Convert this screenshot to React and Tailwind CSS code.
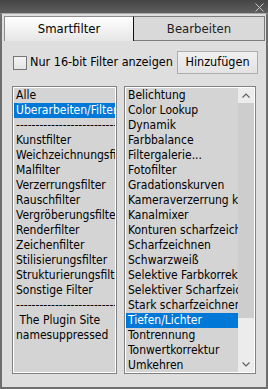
import React from "react";

const leftItems = [
  "Alle",
  "Überarbeiten/Filter",
  "------------------------------------",
  "Kunstfilter",
  "Weichzeichnungsfilter",
  "Malfilter",
  "Verzerrungsfilter",
  "Rauschfilter",
  "Vergröberungsfilter",
  "Renderfilter",
  "Zeichenfilter",
  "Stilisierungsfilter",
  "Strukturierungsfilter",
  "Sonstige Filter",
  "------------------------------------",
  " The Plugin Site",
  "namesuppressed",
];

const rightItems = [
  "Belichtung",
  "Color Lookup",
  "Dynamik",
  "Farbbalance",
  "Filtergalerie...",
  "Fotofilter",
  "Gradationskurven",
  "Kameraverzerrung korrigieren",
  "Kanalmixer",
  "Konturen scharfzeichnen",
  "Scharfzeichnen",
  "Schwarzweiß",
  "Selektive Farbkorrektur",
  "Selektiver Scharfzeichner",
  "Stark scharfzeichnen",
  "Tiefen/Lichter",
  "Tontrennung",
  "Tonwertkorrektur",
  "Umkehren",
  "Verflüssigen",
];

function Row({ text, selected }) {
  return (
    <div
      className={
        "h-[15px] leading-[15px] pl-[2px] whitespace-pre overflow-hidden " +
        (selected ? "bg-[#0078d7] text-white" : "text-black")
      }
    >
      {text}
    </div>
  );
}

export default function App() {
  return (
    <div
      className="w-[268px] h-[389px] flex flex-col overflow-hidden text-[12px]"
      style={{ fontFamily: '"DejaVu Sans Condensed", "DejaVu Sans", sans-serif' }}
    >
      {/* title bar */}
      <div className="h-[13px] shrink-0 bg-gradient-to-b from-[#454545] to-[#5e5e5e] flex justify-end items-center pr-[4px]">
        <svg width="9" height="9" viewBox="0 0 9 9" className="mt-[1px]">
          <path d="M0.5 0.5 L8.5 8.5 M8.5 0.5 L0.5 8.5" stroke="#c8c8c8" strokeWidth="1" />
        </svg>
      </div>
      {/* body */}
      <div className="flex-1 flex flex-col bg-[#dedede] border-x-2 border-b-2 border-[#6e6e6e] border-t border-t-[#a8a8a8]">
        {/* tabs */}
        <div className="flex mt-[2px] ml-[2px] mr-[1px] h-[25px]">
          <div className="w-[130px] border-l border-t border-[#8c8c8c] border-r border-r-[#111] bg-gradient-to-b from-[#ffffff] to-[#e6e6e6] flex items-center justify-center text-[13px] text-black whitespace-nowrap">
            Smartfilter
          </div>
          <div className="flex-1 border-t border-b border-r border-[#7c7c7c] bg-[#d9d9d9] flex items-center justify-center text-[13px] text-[#222] whitespace-nowrap">
            Bearbeiten
          </div>
        </div>
        {/* options row */}
        <div className="flex items-center mt-[10px] pl-[11px] pr-[8px] h-[23px]">
          <div className="w-[14px] h-[14px] shrink-0 border border-[#777] bg-gradient-to-b from-[#f4f4f4] to-[#e4e4e4] mt-[1px]" />
          <div className="ml-[3px] text-[12.5px] text-black whitespace-nowrap">Nur 16-bit Filter anzeigen</div>
          <div className="ml-auto shrink-0 w-[81px] h-[23px] border border-[#adadad] bg-gradient-to-b from-[#f0f0f0] to-[#e3e3e3] flex items-center justify-center text-[12.5px] text-black whitespace-nowrap">
            Hinzufügen
          </div>
        </div>
        {/* lists */}
        <div className="flex mt-[12px] pl-[10px] gap-[7px]">
          <div className="w-[105px] h-[288px] border border-[#828282]">
            <div className="w-full h-full border border-white bg-[#d4d4d4] overflow-hidden">
              {leftItems.map((t, i) => (
                <Row key={i} text={t} selected={i === 1} />
              ))}
            </div>
          </div>
          <div className="w-[132px] h-[288px] border border-[#828282]">
            <div className="w-full h-full border border-white bg-[#d4d4d4] flex overflow-hidden">
              <div className="flex-1 overflow-hidden">
                {rightItems.map((t, i) => (
                  <Row key={i} text={t} selected={i === 15} />
                ))}
              </div>
              <div className="w-[16px] shrink-0 flex flex-col bg-[#ececec]">
                <div className="h-[15px] flex items-center justify-center">
                  <svg width="8" height="5" viewBox="0 0 8 5">
                    <path d="M0.5 4.5 L4 1 L7.5 4.5" stroke="#606060" strokeWidth="1.2" fill="none" />
                  </svg>
                </div>
                <div className="h-[215px] bg-[#cdcdcd]" />
                <div className="flex-1" />
                <div className="h-[15px] flex items-center justify-center">
                  <svg width="8" height="5" viewBox="0 0 8 5">
                    <path d="M0.5 0.5 L4 4 L7.5 0.5" stroke="#606060" strokeWidth="1.2" fill="none" />
                  </svg>
                </div>
              </div>
            </div>
          </div>
        </div>
      </div>
    </div>
  );
}
